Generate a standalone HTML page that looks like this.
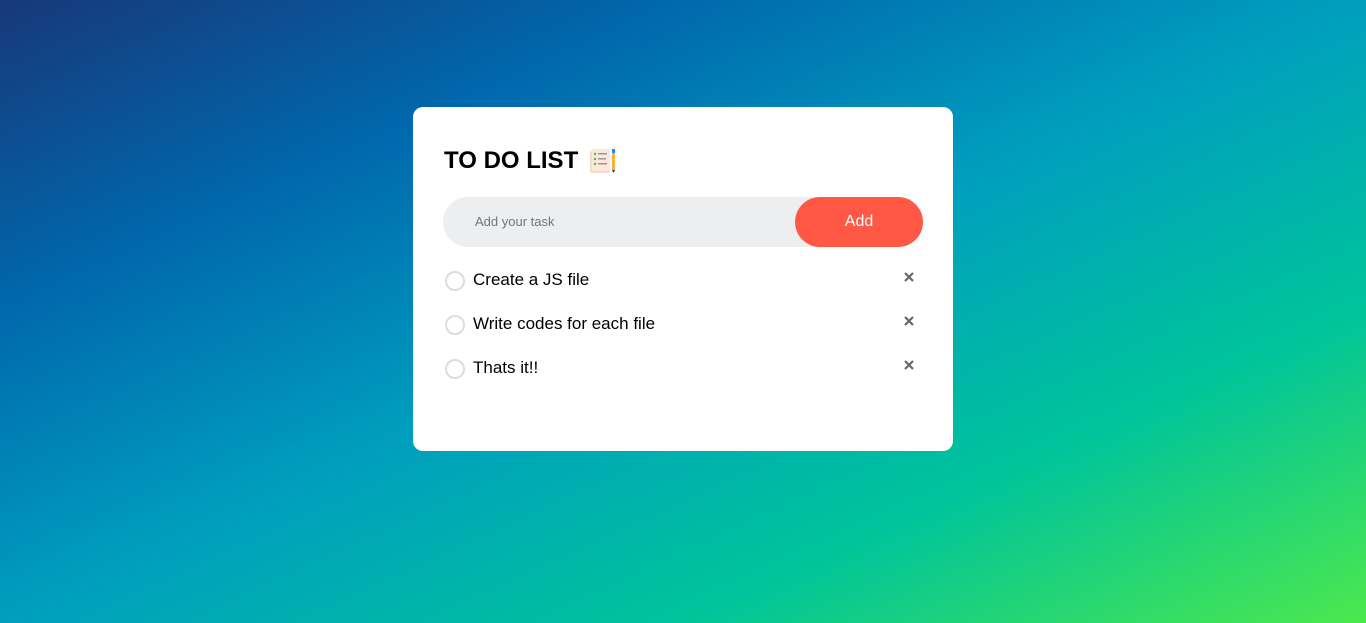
<!DOCTYPE html>
<html><head><meta charset="utf-8"><style>
*{margin:0;padding:0;box-sizing:border-box}
body{width:1366px;height:623px;overflow:hidden;font-family:"Liberation Sans",sans-serif;
background:linear-gradient(to bottom right,#173879 0%,#0068ad 25%,#009fbe 50%,#00c49a 75%,#4ce84c 100%);position:relative}
.card{position:absolute;left:413px;top:107px;width:540px;height:344px;background:#fff;border-radius:10px}
h2{position:absolute;left:31px;top:40px;font-size:24px;font-weight:bold;color:#002765;display:flex;align-items:center}
h2 span{color:#000}
.row{position:absolute;left:30px;top:90px;width:480px;height:50px;background:#edeef0;border-radius:25px}
.row .ph{position:absolute;left:32px;top:17px;font-size:13px;color:#757575}
.row .btn{position:absolute;right:0;top:0;width:128px;height:50px;background:#ff5945;border-radius:25px;color:#fff;font-size:16px;text-align:center;line-height:50px}
.item{position:absolute;left:32px;font-size:17px;color:#000}
.item .c{position:absolute;left:0;top:1px;width:20px;height:20px;border:2px solid #ddd;border-radius:50%}
.item .t{position:absolute;left:28px;top:0;white-space:nowrap}
.x{position:absolute;left:491px}
</style></head><body>
<div class="card">
<h2><span>TO DO LIST</span>
<svg width="30" height="26" viewBox="0 0 30 26" style="margin-left:10px">
<rect x="2" y="3" width="20" height="22" rx="2" fill="#fbd9c8"/>
<rect x="4" y="1" width="18" height="22" rx="1" fill="#fde7dc"/>
<circle cx="7" cy="6" r="1.2" fill="#3c3"/><circle cx="7" cy="11" r="1.2" fill="#3c3"/><circle cx="7" cy="16" r="1.2" fill="#3c3"/>
<rect x="10" y="5" width="9" height="1.5" fill="#999"/><rect x="10" y="10" width="8" height="1.5" fill="#999"/><rect x="10" y="15" width="9" height="1.5" fill="#999"/>
<rect x="24" y="1" width="3" height="4" fill="#1e88e5"/><rect x="24" y="5" width="3" height="17" fill="#f9b233"/><path d="M24 22h3l-1.5 3z" fill="#333"/>
</svg></h2>
<div class="row"><div class="ph">Add your task</div><div class="btn">Add</div></div>
<div class="item" style="top:163px"><div class="c"></div><div class="t">Create a JS file</div></div>
<div class="item" style="top:207px"><div class="c"></div><div class="t">Write codes for each file</div></div>
<div class="item" style="top:251px"><div class="c"></div><div class="t">Thats it!!</div></div>
<svg class="x" style="top:165px" width="10" height="10"><path d="M1 1L9 9M9 1L1 9" stroke="#666" stroke-width="2.2"/></svg>
<svg class="x" style="top:209px" width="10" height="10"><path d="M1 1L9 9M9 1L1 9" stroke="#666" stroke-width="2.2"/></svg>
<svg class="x" style="top:253px" width="10" height="10"><path d="M1 1L9 9M9 1L1 9" stroke="#666" stroke-width="2.2"/></svg>
</div>
</body></html>
